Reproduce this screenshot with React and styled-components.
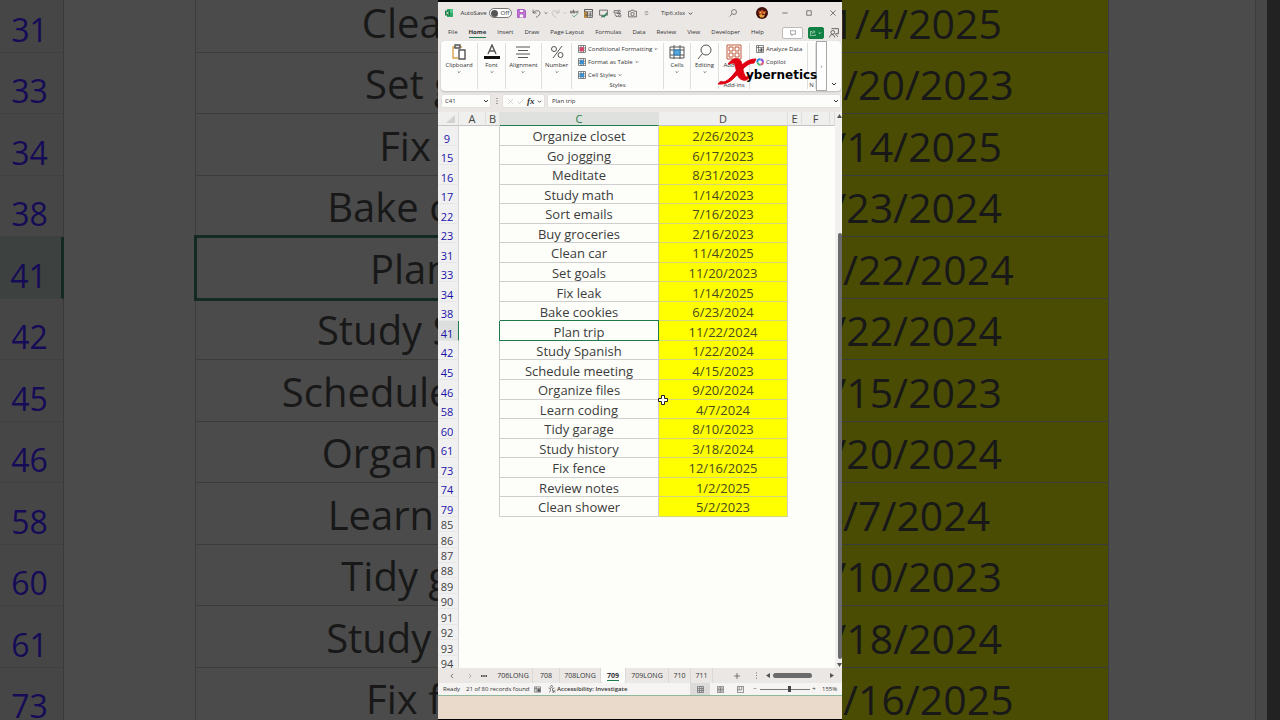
import React from "react";
import styled, { createGlobalStyle, css } from "styled-components";

const GlobalStyle = createGlobalStyle`
  * {
    box-sizing: border-box;
  }
  body {
    margin: 0;
    background: #222222;
    font-family: "Open Sans", "Noto Sans", sans-serif;
  }
  button, input {
    font: inherit;
    color: inherit;
    margin: 0;
    padding: 0;
    border: 0;
    background: none;
  }
  svg {
    display: block;
    flex: none;
  }
`;

const GREEN = "#1e7a4c";

const Stage = styled.div`
  display: grid;
  grid-template-columns: minmax(0, 1fr) minmax(404px, 31%) minmax(0, 1fr);
  grid-template-rows: 100vh;
`;

/* enlarged copy of the sheet on both sides of the window */

const BackPane = styled.div`
  display: flex;
  align-items: center;
  justify-content: ${props => (props.$right ? "flex-end" : "flex-start")};
  overflow: hidden;
`;

const BackSheet = styled.div`
  flex: none;
  width: ${props => props.$width};
  height: calc(100vh + 18px);
  display: grid;
  grid-auto-rows: 1fr;
  font-size: ${props => props.$size};
  line-height: 48px;
  color: #181818;
`;

const BackRow = styled.div`
  display: grid;
  grid-template-columns: ${props => props.$columns};
  white-space: nowrap;
  min-height: 0;
`;

const BackCell = styled.div`
  display: flex;
  align-items: center;
  justify-content: center;
  padding-top: 3px;
  background: ${props => props.$fill || "#4b4b4b"};
  border-right: ${props => (props.$side ? "1px solid #3c3c3c" : "0")};
  border-bottom: ${props => (props.$line ? "1px solid #3c3d36" : "0")};
  ${props =>
    props.$selected &&
    css`
      outline: 3px solid #14291f;
      outline-offset: -1px;
      z-index: 1;
    `}
`;

const BackNumber = styled(BackCell)`
  align-items: flex-end;
  padding: 0 4px 0 0;
  font-size: 32px;
  line-height: 44px;
  color: #150b57;
  background: ${props => (props.$active ? "#3d413f" : "#464646")};
  border-right: ${props => (props.$active ? "3px solid #14291f" : "1px solid #3a3a36")};
  border-bottom: 1px solid #40403f;
`;

/* application window */

const Window = styled.div`
  display: flex;
  flex-direction: column;
  border: solid #000;
  border-width: 2px 0 1px;
  background: #eae7e5;
  color: #333;
  font-size: 6px;
  line-height: 8px;
  white-space: nowrap;
  position: relative;
`;

const TitleBar = styled.header`
  display: grid;
  grid-template-columns: 22px 27px 26px 16px 22px 16px 14px 15px 14px 15px 15px 13px 1fr 30px 28px 18px 30px 18px;
  align-items: center;
  height: 22px;
  justify-items: center;
`;

const IconButton = styled.button`
  display: flex;
  align-items: center;
  justify-content: center;
  gap: 3px;
`;

const FileName = styled(IconButton)`
  justify-self: start;
  padding-left: 8px;
`;

const Toggle = styled.label`
  display: flex;
  align-items: center;
  gap: 3px;
  width: 23px;
  height: 10px;
  padding-left: 1px;
  border: 1px solid #777;
  border-radius: 5px;
  background: #fff;

  input {
    appearance: none;
    width: 7px;
    height: 7px;
    border-radius: 50%;
    background: #555;
  }
`;

const MenuBar = styled.nav`
  display: flex;
  align-items: center;
  height: 17px;
  padding: 1px 3px 0 10px;
  gap: 11px;
`;

const MenuItem = styled.button`
  line-height: 9px;
  border-bottom: 1px solid transparent;
  ${props =>
    props.$active &&
    css`
      font-weight: 700;
      border-color: ${GREEN};
    `}
`;

const MenuActions = styled.div`
  display: flex;
  align-items: center;
  gap: 5px;
  margin-left: auto;
`;

const PillButton = styled(IconButton)`
  gap: 2px;
  width: ${props => (props.$green ? "16px" : "21px")};
  height: 12px;
  border-radius: 2px;
  color: ${props => (props.$green ? "#fff" : "#444")};
  background: ${props => (props.$green ? "#118043" : "#fff")};
  border: 1px solid ${props => (props.$green ? "#118043" : "#bbb")};
`;

const Ribbon = styled.section`
  display: grid;
  grid-template-columns: 37px 28px 36px 30px 92px 27px 28px 31px 58px 8px 11px 1fr;
  height: 50px;
  margin: 0 1px 0 3px;
  background: #fdfdfc;
  border-radius: 4px;
  box-shadow: 0 1px 2px #bbb;
`;

const Group = styled.div`
  display: flex;
  flex-direction: column;
  align-items: center;
  margin: 2px 0;
  border-right: 1px solid #dedede;
  overflow: hidden;
`;

const BigButton = styled.button`
  display: flex;
  flex-direction: column;
  align-items: center;
  gap: 1px;
  padding-top: 1px;
`;

const GroupLabel = styled.span`
  margin-top: auto;
`;

const SmallList = styled.div`
  align-self: flex-start;
  display: flex;
  flex-direction: column;
  gap: 5px;
  padding: 2px 0 0 6px;
`;

const SmallButton = styled.button`
  display: flex;
  align-items: center;
  gap: 2px;
`;

const RibbonScroll = styled.button`
  border: 1px solid #aaa;
  background: #fff;
`;

const RibbonCollapse = styled(IconButton)`
  align-items: flex-end;
  padding-bottom: 4px;
`;

const FormulaBar = styled.div`
  display: grid;
  grid-template-columns: 50px 11px 43px 1fr;
  align-items: center;
  height: 21px;
  padding: 0 1px 1px 3px;
`;

const Field = styled.div`
  display: flex;
  align-items: center;
  justify-content: ${props => props.$spread || "space-between"};
  height: 14px;
  padding: 0 1px 0 3px;
  background: #fdfdfc;
  border: 1px solid #e2e0de;
  border-radius: 2px;

  input {
    flex: 1;
    min-width: 0;
  }
`;

const FormulaField = styled(Field)`
  margin-left: 2px;
  padding-left: 4px;
`;

const FxButton = styled.button`
  font: italic 700 9px/10px "Liberation Serif", serif;
`;

/* sheet grid */

const SheetArea = styled.main`
  flex: 1;
  min-height: 0;
  display: grid;
  grid-template-columns: minmax(0, 1fr) 7px;
`;

const Sheet = styled.table`
  display: flex;
  flex-direction: column;
  min-height: 0;
  font-size: 13px;
  line-height: 16px;
  background: #fdfefa;
  overflow: hidden;

  tbody {
    flex: 1;
    display: grid;
    grid-template-rows: repeat(20, 19fr) repeat(10, 15fr);
    min-height: 0;
    margin-bottom: -3px;
  }
  tr {
    display: grid;
    grid-template-columns: 21px 27fr 14fr 159fr 129fr 14fr 28fr 5fr;
    min-height: 0;
  }
`;

const ColumnHead = styled.th`
  height: 14px;
  padding: 0;
  font-size: 11px;
  line-height: 13px;
  font-weight: 400;
  text-align: center;
  color: ${props => (props.$active ? GREEN : "#444")};
  background: ${props => (props.$active ? "#dfe1de" : "#efefed")};
  border-right: 1px solid #dededc;
  border-bottom: 1px solid ${props => (props.$active ? GREEN : "#c4c4c4")};
`;

const RowHead = styled.th`
  display: flex;
  align-items: flex-end;
  justify-content: center;
  min-height: 0;
  padding: 0 2px 0 0;
  font-size: 11px;
  line-height: 12px;
  font-weight: 400;
  color: ${props => (props.$filtered ? "#1b12a8" : "#444")};
  background: ${props => (props.$active ? "#dcdfdd" : "#f0f0f1")};
  border-right: 1px solid ${props => (props.$active ? GREEN : "#d8d8d8")};
  border-bottom: 1px solid #e6e6e6;
`;

const Cell = styled.td`
  display: flex;
  align-items: center;
  justify-content: center;
  min-height: 0;
  padding: 2px 0 0;
  color: ${props => (props.$yellow ? "#4a4a20" : "#3c3c3c")};
  background: ${props => (props.$yellow ? "#ffff00" : "#fdfefa")};
  border-bottom: 1px solid ${props => (props.$yellow ? "#d6d67a" : "#cfcfcf")};
  border-right: 1px solid #cfcfcf;
  ${props =>
    props.$selected &&
    css`
      border-color: ${GREEN};
      box-shadow: 0 -1px 0 ${GREEN}, -1px 0 0 ${GREEN};
      z-index: 1;
    `}
`;

const Blank = styled.td`
  padding: 0;
  border-right: ${props => (props.$edge ? "1px solid #cfcfcf" : "0")};
`;

const VerticalScroll = styled.div`
  display: flex;
  flex-direction: column;
  align-items: flex-end;
  background: #f1f0ef;
  padding: 2px 0 1px;
`;

const VerticalTrack = styled.div`
  flex: 1;
  display: grid;
  grid-template-rows: 114fr 425fr 3fr;
`;

const VerticalThumb = styled.div`
  grid-row: 2;
  width: 4px;
  border-radius: 2px;
  background: #6b6b6b;
`;

const SheetTabs = styled.nav`
  display: grid;
  grid-template-columns: 28px 8px 20px 39px 27px 41px 25px 43px 22px 22px 1fr 12px 80px;
  align-items: stretch;
  height: 15px;
  font-size: 7px;
  line-height: 9px;
`;

const SheetTab = styled.button`
  text-align: center;
  border-right: 1px solid #dcd8d5;
  ${props =>
    props.$active &&
    css`
      font-weight: 700;
      background: #fdfdfc;
      border-radius: 0 0 3px 3px;

      span {
        border-bottom: 1px solid ${GREEN};
      }
    `}
`;

const AddSheet = styled(IconButton)`
  padding-left: 11px;
`;

const HorizontalScroll = styled.div`
  display: flex;
  align-items: center;
  padding: 0 8px 0 4px;
`;

const HorizontalThumb = styled.div`
  width: 39px;
  height: 5px;
  margin: 0 auto 0 2px;
  border-radius: 3px;
  background: #6b6b6b;
`;

const StatusBar = styled.footer`
  display: grid;
  grid-template-columns: 23px 68px 14px 1fr 20px 20px 20px 10px 50px 8px 24px;
  align-items: center;
  height: 13px;
  padding-left: 5px;
  background: #f5f4f2;
  border-bottom: 1px solid #8fb79d;
`;

const Accessibility = styled.button`
  display: flex;
  align-items: center;
  gap: 1px;
  font-weight: 600;
`;

const ViewButton = styled(IconButton)`
  height: 12px;
  background: ${props => (props.$active ? "#dcdbd9" : "none")};
`;

const Zoom = styled.input`
  appearance: none;
  width: 100%;
  height: 6px;
  background: linear-gradient(#777, #777) center / 100% 1px no-repeat;

  &::-webkit-slider-thumb {
    appearance: none;
    width: 3px;
    height: 6px;
    background: #444;
  }
`;

const ZoomLevel = styled.span`
  padding-left: 4px;
`;

const Taskbar = styled.div`
  height: 23px;
  background: #e9dacb;
`;

const Brand = styled.div`
  position: absolute;
  top: 54px;
  left: 279px;
  display: flex;
  align-items: flex-start;
  font: 700 12px/15px "DejaVu Sans", sans-serif;
  color: #000;

  span {
    margin: 12px 0 0 -12px;
  }
`;

const Pointer = styled.svg`
  position: absolute;
  top: 392px;
  left: 219px;
  z-index: 2;
`;

const Chevron = ({ size = 5 }) => (
  <svg width={size} height={size} viewBox="0 0 6 6" fill="none" stroke="currentColor">
    <path d="M1 2l2 2 2-2" />
  </svg>
);

const Triangle = ({ d }) => (
  <svg width="5" height="5" viewBox="0 0 5 5" fill="#555">
    <path d={d} />
  </svg>
);

const Drawing = ({ size = 10, stroke = "#555", children, ...rest }) => (
  <svg width={size} height={size} viewBox="0 0 16 16" fill="none" stroke={stroke} strokeWidth="1.4" {...rest}>
    {children}
  </svg>
);

const MoreDots = styled(Drawing)`
  place-self: center;
`;

const GridDrawing = ({ size = 10, accent }) => (
  <Drawing size={size}>
    <path d="M1 1h14v14H1zM1 6h14M1 10.500h14M6 1v14M11 1v14" />
    {accent && <path d="M4 5h7v7H4z" fill={accent} stroke={accent} />}
  </Drawing>
);

const tasks = [
  [9, "Organize closet", "2/26/2023"],
  [15, "Go jogging", "6/17/2023"],
  [16, "Meditate", "8/31/2023"],
  [17, "Study math", "1/14/2023"],
  [22, "Sort emails", "7/16/2023"],
  [23, "Buy groceries", "2/16/2023"],
  [31, "Clean car", "11/4/2025"],
  [33, "Set goals", "11/20/2023"],
  [34, "Fix leak", "1/14/2025"],
  [38, "Bake cookies", "6/23/2024"],
  [41, "Plan trip", "11/22/2024"],
  [42, "Study Spanish", "1/22/2024"],
  [45, "Schedule meeting", "4/15/2023"],
  [46, "Organize files", "9/20/2024"],
  [58, "Learn coding", "4/7/2024"],
  [60, "Tidy garage", "8/10/2023"],
  [61, "Study history", "3/18/2024"],
  [73, "Fix fence", "12/16/2025"],
  [74, "Review notes", "1/2/2025"],
  [79, "Clean shower", "5/2/2023"]
];

const enlarged = tasks.slice(6, 18);
const emptyRows = [85, 86, 87, 88, 89, 90, 91, 92, 93, 94];
const columns = ["A", "B", "C", "D", "E", "F", ""];
const menus = ["File", "Home", "Insert", "Draw", "Page Layout", "Formulas", "Data", "Review", "View", "Developer", "Help"];
const sheets = ["706LONG", "708", "708LONG", "709", "709LONG", "710", "711"];

const LeftBackdrop = () => (
  <BackPane aria-hidden="true">
    <BackSheet $width="160%" $size="40px">
      {enlarged.map(([row, task]) => (
        <BackRow key={row} $columns="64fr 131fr 504fr">
          <BackNumber $active={row === 41}>{row}</BackNumber>
          <BackCell $side />
          <BackCell $line $selected={row === 41}>{task}</BackCell>
        </BackRow>
      ))}
    </BackSheet>
  </BackPane>
);

const RightBackdrop = () => (
  <BackPane $right aria-hidden="true">
    <BackSheet $width="132%" $size="41px">
      {enlarged.map(([row, , date]) => (
        <BackRow key={row} $columns="409fr 148fr 11fr 13fr">
          <BackCell $line $side $fill="#4b4c04">{date}</BackCell>
          <BackCell $side />
          <BackCell $fill="#474747" />
          <BackCell $fill="#222222" />
        </BackRow>
      ))}
    </BackSheet>
  </BackPane>
);

const Title = () => (
  <TitleBar>
    <svg width="8" height="8" viewBox="0 0 16 16">
      <rect x="4" y="0" width="12" height="16" rx="1" fill="#2fa869" />
      <path d="M10 0h6v8h-6z" fill="#52c58b" />
      <rect x="0" y="3" width="10" height="10" rx="1" fill="#107c41" />
      <path d="M3 5l4 6M7 5l-4 6" stroke="#fff" strokeWidth="1.500" />
    </svg>
    <span>AutoSave</span>
    <Toggle>
      <input type="checkbox" aria-label="AutoSave" />
      Off
    </Toggle>
    <IconButton aria-label="Save">
      <Drawing size={9} stroke="#9b3fb5">
        <path d="M1 1h12l2 2v12H1z" fill="#c883d8" />
        <path d="M4 1h8v5H4zM4 15V9h8v6" fill="#fff" />
      </Drawing>
    </IconButton>
    <IconButton aria-label="Undo">
      <Drawing size={9}>
        <path d="M2 1v6h6M2 7c4-6 13-5 12 1-1 4-4 5-7 7" />
      </Drawing>
      <Chevron size={4} />
    </IconButton>
    <IconButton aria-label="Redo">
      <Drawing size={9} stroke="#bbb">
        <path d="M14 1v6H8M14 7C10 1 1 2 2 8c1 4 4 5 7 7" />
      </Drawing>
      <Drawing size={4} stroke="#bbb" strokeWidth="3">
        <path d="M3 5l5 5 5-5" />
      </Drawing>
    </IconButton>
    <IconButton aria-label="Spelling">
      <Drawing size={9}>
        <path d="M1 7V4h3v3H1M6 1v6h3V4H6M15 4h-3v3h3" />
        <path d="M4 11l3 3 6-5" stroke="#3f9a63" />
      </Drawing>
    </IconButton>
    <IconButton aria-label="Table">
      <Drawing size={9}>
        <path d="M1 1h14v14H1z" fill="#fff" />
        <path d="M1 5h5v10H1z" fill="#e7a64a" stroke="#c98a33" />
        <path d="M1 1h14v4H1zM1 9h14M6 5v10M11 5v10M1 12h14" />
      </Drawing>
    </IconButton>
    <IconButton aria-label="Comments">
      <Drawing size={9}>
        <path d="M1 2h14v9H8l-3 4v-4H1z" />
        <path d="M6 11l3 3 5-7" stroke="#118043" strokeWidth="2" />
      </Drawing>
    </IconButton>
    <IconButton aria-label="Shapes">
      <Drawing size={9}>
        <path d="M9 3H2v4h9M7 8h7M5 13h5M3 9l3 4" />
        <circle cx="12" cy="12" r="2" />
        <circle cx="11" cy="4" r="2" />
      </Drawing>
    </IconButton>
    <IconButton aria-label="Camera">
      <Drawing size={9}>
        <path d="M1 4h4l1-2h4l1 2h4v10H1z" />
        <circle cx="8" cy="9" r="3" />
      </Drawing>
    </IconButton>
    <IconButton aria-label="Customize toolbar">
      <Drawing size={5} strokeWidth="2">
        <path d="M3 3h10M3 8l5 5 5-5" />
      </Drawing>
    </IconButton>
    <FileName>
      Tip6.xlsx <Chevron />
    </FileName>
    <IconButton aria-label="Search">
      <Drawing size={8}>
        <circle cx="10" cy="6" r="5" />
        <path d="M6 10l-5 5" />
      </Drawing>
    </IconButton>
    <svg width="12" height="12" viewBox="0 0 16 16">
      <circle cx="8" cy="8" r="8" fill="#43120c" />
      <path d="M3 4l3 2 2-3 3 3 3-1-2 4-8 1z" fill="#c4501f" />
      <path d="M4 11l3-2 2 2 3-1-2 4H6z" fill="#e3a23a" />
      <circle cx="6" cy="7" r="1" fill="#f4d27a" />
      <circle cx="11" cy="8" r="1" fill="#f4d27a" />
    </svg>
    <IconButton aria-label="Minimize">
      <Drawing size={6} strokeWidth="2">
        <path d="M1 8h14" />
      </Drawing>
    </IconButton>
    <IconButton aria-label="Maximize">
      <Drawing size={6} strokeWidth="2">
        <path d="M2 2h12v12H2z" />
      </Drawing>
    </IconButton>
    <IconButton aria-label="Close">
      <Drawing size={6} strokeWidth="2">
        <path d="M1 1l14 14M15 1L1 15" />
      </Drawing>
    </IconButton>
  </TitleBar>
);

const Menu = () => (
  <MenuBar>
    {menus.map(name => (
      <MenuItem key={name} $active={name === "Home"}>
        {name}
      </MenuItem>
    ))}
    <MenuActions>
      <PillButton aria-label="Comments">
        <Drawing size={6}>
          <path d="M1 2h14v9H8l-3 4v-4H1z" />
        </Drawing>
      </PillButton>
      <PillButton $green aria-label="Share">
        <Drawing size={6} stroke="#fff">
          <path d="M6 4H1v11h13v-4M5 10c0-4 3-5 7-5M9 1l4 4-4 4" />
        </Drawing>
        <Chevron size={4} />
      </PillButton>
      <IconButton aria-label="Account">
        <Drawing size={10}>
          <path d="M4 1h11v8h-4M1 15c0-6 8-6 8 0M10 9l4 5" />
          <circle cx="6" cy="7" r="3" />
        </Drawing>
      </IconButton>
    </MenuActions>
  </MenuBar>
);

const RibbonBar = () => (
  <Ribbon>
    <Group>
      <BigButton>
        <Drawing size={16}>
          <path d="M11 3H2v11h5" stroke="#d9a04c" />
          <path d="M4 1h5v3H4z" fill="#eee" />
          <path d="M8 6h6v9H8z" fill="#fff" />
        </Drawing>
        Clipboard
        <Chevron size={4} />
      </BigButton>
    </Group>
    <Group>
      <BigButton>
        <Drawing size={16}>
          <path d="M4 10l4-9 4 9M5 7h6" />
          <path d="M0 13.500h16" stroke="#111" strokeWidth="3" />
        </Drawing>
        Font
        <Chevron size={4} />
      </BigButton>
    </Group>
    <Group>
      <BigButton>
        <Drawing size={16} strokeWidth="1">
          <path d="M1 3h14M3 6.500h10M1 10h14M3 13.500h10" />
        </Drawing>
        Alignment
        <Chevron size={4} />
      </BigButton>
    </Group>
    <Group>
      <BigButton>
        <Drawing size={16} strokeWidth="1">
          <path d="M13 2L4 14" />
          <circle cx="5" cy="5" r="2.500" />
          <circle cx="11.500" cy="11" r="2.500" />
        </Drawing>
        Number
        <Chevron size={4} />
      </BigButton>
    </Group>
    <Group>
      <SmallList>
        <SmallButton>
          <GridDrawing size={8} accent="#d8486b" />
          Conditional Formatting <Chevron size={4} />
        </SmallButton>
        <SmallButton>
          <GridDrawing size={8} accent="#3b8fd0" />
          Format as Table <Chevron size={4} />
        </SmallButton>
        <SmallButton>
          <GridDrawing size={8} accent="#3b8fd0" />
          Cell Styles <Chevron size={4} />
        </SmallButton>
      </SmallList>
      <GroupLabel>Styles</GroupLabel>
    </Group>
    <Group>
      <BigButton>
        <Drawing size={16} strokeWidth="1">
          <path d="M1 3h14v11H1zM1 6h14M1 11h14M5 1v14M11 1v14" />
          <path d="M5 6h6v5H5z" fill="#56a5dc" stroke="#2f7fb8" />
        </Drawing>
        Cells
        <Chevron size={4} />
      </BigButton>
    </Group>
    <Group>
      <BigButton>
        <Drawing size={16} strokeWidth="1">
          <circle cx="9" cy="6" r="5" />
          <path d="M5.500 9.500L1 15" />
        </Drawing>
        Editing
        <Chevron size={4} />
      </BigButton>
    </Group>
    <Group>
      <BigButton>
        <Drawing size={16} stroke="#c05a3c" strokeWidth="1">
          <path d="M1 1h14v14H1z" />
          <path d="M3 3h4v4H3zM9 3h4v4H9zM3 9h4v4H3zM9 9h4v4H9z" />
        </Drawing>
        Add-ins
      </BigButton>
      <GroupLabel>Add-ins</GroupLabel>
    </Group>
    <Group>
      <SmallList>
        <SmallButton>
          <Drawing size={8}>
            <path d="M1 1h14v14H1zM1 5h14M5 1v14" />
            <path d="M8 13V9M11 13V7" strokeWidth="2" />
            <circle cx="11" cy="10" r="3" />
          </Drawing>
          Analyze Data
        </SmallButton>
        <SmallButton>
          <Drawing size={8} strokeWidth="4">
            <path d="M3 9C2 4 5 2 9 3" stroke="#2a86d8" />
            <path d="M9 3c4 0 5 2 5 5" stroke="#8a55d6" />
            <path d="M14 8c0 4-2 5-5 5" stroke="#e0567c" />
            <path d="M9 13c-3 1-5-1-6-4" stroke="#4db66a" />
          </Drawing>
          Copilot
        </SmallButton>
      </SmallList>
    </Group>
    <Group>
      <GroupLabel>N</GroupLabel>
    </Group>
    <RibbonScroll aria-label="Scroll ribbon">›</RibbonScroll>
    <RibbonCollapse aria-label="Collapse ribbon">
      <Chevron size={6} />
    </RibbonCollapse>
  </Ribbon>
);

const Formula = () => (
  <FormulaBar>
    <Field>
      <input aria-label="Name box" defaultValue="C41" />
      <IconButton aria-label="Cell names">
        <Chevron size={6} />
      </IconButton>
    </Field>
    <MoreDots size={8} strokeWidth="2">
      <path d="M8 2v2M8 7v2M8 12v2" />
    </MoreDots>
    <Field $spread="space-around">
      <Drawing size={7} stroke="#bbb">
        <path d="M2 2l12 12M14 2L2 14" />
      </Drawing>
      <Drawing size={8} stroke="#bbb">
        <path d="M1 9l4 4L15 3" />
      </Drawing>
      <FxButton>fx</FxButton>
      <Chevron size={5} />
    </Field>
    <FormulaField>
      <input aria-label="Formula" defaultValue="Plan trip" />
      <IconButton aria-label="Expand formula bar">
        <Chevron size={6} />
      </IconButton>
    </FormulaField>
  </FormulaBar>
);

const SheetGrid = () => (
  <SheetArea>
    <Sheet>
      <thead>
        <tr>
          <ColumnHead aria-label="Select all">
            <svg width="19" height="13" viewBox="0 0 19 13">
              <path d="M17 3v8H8z" fill="#d2d2d0" />
            </svg>
          </ColumnHead>
          {columns.map(name => (
            <ColumnHead key={name} $active={name === "C"}>
              {name}
            </ColumnHead>
          ))}
        </tr>
      </thead>
      <tbody>
        {tasks.map(([row, task, date]) => (
          <tr key={row}>
            <RowHead $filtered $active={row === 41}>{row}</RowHead>
            <Blank />
            <Blank $edge />
            <Cell $selected={row === 41}>{task}</Cell>
            <Cell $yellow>{date}</Cell>
          </tr>
        ))}
        {emptyRows.map(row => (
          <tr key={row}>
            <RowHead>{row}</RowHead>
          </tr>
        ))}
      </tbody>
    </Sheet>
    <VerticalScroll>
      <Triangle d="M0 4l2.500-4L5 4z" />
      <VerticalTrack>
        <VerticalThumb />
      </VerticalTrack>
      <Triangle d="M0 1l2.500 4L5 1z" />
    </VerticalScroll>
  </SheetArea>
);

const Tabs = () => (
  <SheetTabs>
    <IconButton aria-label="Previous sheet">
      <Drawing size={6} strokeWidth="2">
        <path d="M11 2L5 8l6 6" />
      </Drawing>
    </IconButton>
    <IconButton aria-label="Next sheet">
      <Drawing size={6} stroke="#999" strokeWidth="2">
        <path d="M5 2l6 6-6 6" />
      </Drawing>
    </IconButton>
    <IconButton aria-label="More sheets">
      <Drawing size={6} stroke="#222" strokeWidth="4">
        <path d="M0 8h4M6 8h4M12 8h4" />
      </Drawing>
    </IconButton>
    {sheets.map(name => (
      <SheetTab key={name} $active={name === "709"}>
        <span>{name}</span>
      </SheetTab>
    ))}
    <AddSheet aria-label="New sheet">
      <Drawing size={6} strokeWidth="2">
        <path d="M8 0v16M0 8h16" />
      </Drawing>
    </AddSheet>
    <MoreDots size={7} strokeWidth="2">
      <path d="M8 1v2M8 7v2M8 13v2" />
    </MoreDots>
    <HorizontalScroll>
      <Triangle d="M4 0L0 2.500 4 5z" />
      <HorizontalThumb />
      <Triangle d="M1 0l4 2.500L1 5z" />
    </HorizontalScroll>
  </SheetTabs>
);

const Status = () => (
  <StatusBar>
    <span>Ready</span>
    <span>21 of 80 records found</span>
    <Drawing size={7}>
      <path d="M1 2h14v12H1zM1 6h14M5 2v12" />
      <circle cx="11" cy="10" r="3" fill="#555" />
    </Drawing>
    <Accessibility>
      <Drawing size={8}>
        <circle cx="7" cy="3" r="2" />
        <path d="M1 6l4 1v3l-2 5M13 6l-4 1v3l2 5M9 10l6 5M15 10l-6 5" />
      </Drawing>
      Accessibility: Investigate
    </Accessibility>
    <ViewButton $active aria-label="Normal view">
      <GridDrawing size={7} />
    </ViewButton>
    <ViewButton aria-label="Page layout view">
      <Drawing size={7}>
        <path d="M1 1h14v14H1zM4 4h8v8H4zM4 8h8M8 4v8" />
      </Drawing>
    </ViewButton>
    <ViewButton aria-label="Page break view">
      <Drawing size={7}>
        <path d="M1 1h14v14H1zM5 1v8h6V1M1 9h4" />
      </Drawing>
    </ViewButton>
    <IconButton aria-label="Zoom out">−</IconButton>
    <Zoom type="range" min="0" max="100" defaultValue="59" aria-label="Zoom" />
    <IconButton aria-label="Zoom in">+</IconButton>
    <ZoomLevel>155%</ZoomLevel>
  </StatusBar>
);

const App = () => (
  <Stage>
    <GlobalStyle />
    <LeftBackdrop />
    <Window>
      <Title />
      <Menu />
      <RibbonBar />
      <Formula />
      <SheetGrid />
      <Tabs />
      <Status />
      <Taskbar />
      <Brand>
        <svg width="41" height="30" viewBox="0 0 41 30" fill="#e00012" stroke="#e00012" strokeLinejoin="round">
          <path d="M1 28c2-3 4-3 6-2 6-2 10-9 15-14S31 3 39 3l-2 4c-6 0-10 5-15 10S12 29 1 28z" />
          <path d="M11 8c3-4 6-6 10-5 4 1 4 6 5 11 1 4 2 7 4 7l4-2c-2 4-5 6-8 5-5-1-6-6-7-11-1-4-1-6-3-6s-3 1-5 1z" />
        </svg>
        <span>ybernetics</span>
      </Brand>
      <Pointer width="12" height="12" viewBox="0 0 12 12" fill="#fff" stroke="#222">
        <path d="M4.500 1.500h3v3h3v3h-3v3h-3v-3h-3v-3h3z" />
      </Pointer>
    </Window>
    <RightBackdrop />
  </Stage>
);

export default App;
